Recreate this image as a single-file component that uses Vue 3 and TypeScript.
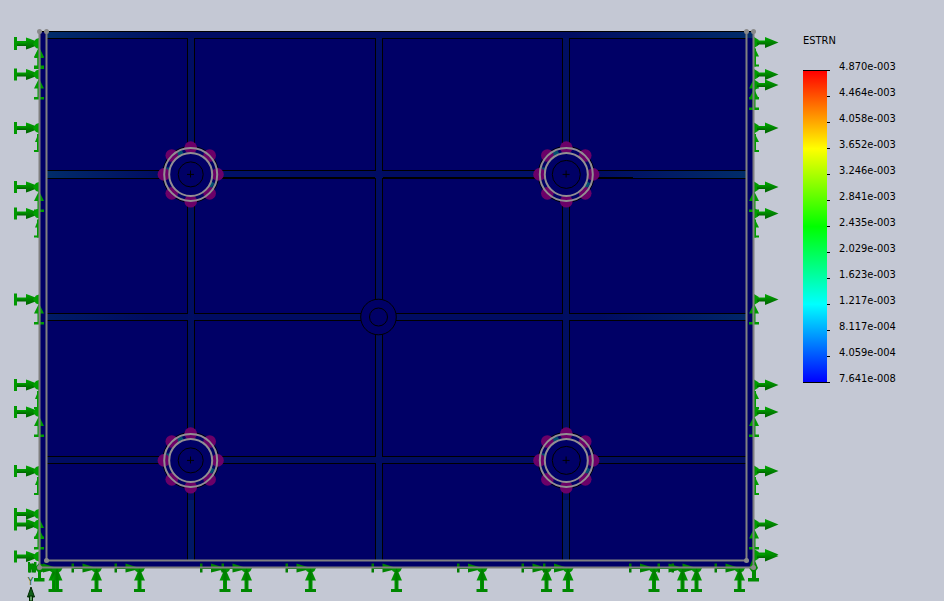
<script setup lang="ts">
interface Point {
  x: number
  y: number
}

interface Load {
  at: number
  side: 'both' | 'outer'
}

interface Bolt extends Point {
  hole: number
}

const columns: [number, number][] = [
  [46.5, 187.5],
  [194.5, 375.5],
  [382.5, 562.5],
  [569.5, 746.5],
]
const rows: [number, number][] = [
  [38.5, 170.5],
  [178.5, 313.5],
  [320.5, 456.5],
  [463.5, 561.5],
]

const bolts: Bolt[] = [
  { x: 190.7, y: 174.4, hole: 12.5 },
  { x: 566.3, y: 174.4, hole: 14 },
  { x: 190.7, y: 460.4, hole: 12.5 },
  { x: 566.3, y: 460.4, hole: 14 },
]
const markers: Point[] = Array.from({ length: 8 }, (_, i) => ({
  x: 26.8 * Math.cos((i * Math.PI) / 4),
  y: 26.8 * Math.sin((i * Math.PI) / 4),
}))

const leftLoads: Load[] = [
  { at: 43, side: 'both' },
  { at: 44, side: 'both' },
  { at: 74.5, side: 'both' },
  { at: 128, side: 'outer' },
  { at: 187, side: 'both' },
  { at: 213.5, side: 'outer' },
  { at: 299.5, side: 'both' },
  { at: 385, side: 'outer' },
  { at: 412, side: 'both' },
  { at: 471, side: 'outer' },
  { at: 514, side: 'both' },
  { at: 524.5, side: 'both' },
  { at: 556.5, side: 'both' },
]
const rightLoads: Load[] = [
  { at: 42.5, side: 'outer' },
  { at: 74.5, side: 'both' },
  { at: 85, side: 'both' },
  { at: 128, side: 'outer' },
  { at: 187, side: 'both' },
  { at: 213.5, side: 'outer' },
  { at: 299.5, side: 'both' },
  { at: 385, side: 'outer' },
  { at: 412, side: 'both' },
  { at: 471, side: 'outer' },
  { at: 524.5, side: 'both' },
  { at: 554.5, side: 'both' },
  { at: 556, side: 'both' },
]
const bottomLoads: number[] = [54, 57, 96.5, 139.5, 225, 246.5, 310.5, 396.5, 482, 546.5, 568, 654, 682.5, 696.5, 739.5]

const corners: Point[] = [
  { x: 39.5, y: 31.5 },
  { x: 46.5, y: 31.5 },
  { x: 746.5, y: 31.5 },
  { x: 753.5, y: 31.5 },
  { x: 46.5, y: 560.5 },
  { x: 746.5, y: 560.5 },
  { x: 39.5, y: 567.5 },
  { x: 753.5, y: 567.5 },
]

const levels: string[] = [
  '4.870e-003',
  '4.464e-003',
  '4.058e-003',
  '3.652e-003',
  '3.246e-003',
  '2.841e-003',
  '2.435e-003',
  '2.029e-003',
  '1.623e-003',
  '1.217e-003',
  '8.117e-004',
  '4.059e-004',
  '7.641e-008',
]
</script>

<template>
  <main class="viewer">
    <svg class="model" viewBox="0 0 790 601" role="img" aria-label="Strain plot of plate">
      <defs>
        <linearGradient id="band-left" x1="0" x2="1">
          <stop offset="0" stop-color="#002c6a" />
          <stop offset="1" stop-color="#000c62" />
        </linearGradient>
        <linearGradient id="band-right" x1="0" x2="1">
          <stop offset="0" stop-color="#000c62" />
          <stop offset="1" stop-color="#002c6a" />
        </linearGradient>
        <linearGradient id="shade-across" x1="0" x2="0" y1="0" y2="1">
          <stop offset="0" stop-color="#00a800" />
          <stop offset="1" stop-color="#006000" />
        </linearGradient>
        <linearGradient id="shade-up" x1="0" x2="1">
          <stop offset="0" stop-color="#00a400" />
          <stop offset="0.5" stop-color="#007c00" />
          <stop offset="1" stop-color="#009c00" />
        </linearGradient>

        <g id="arrow-in">
          <rect x="14" y="-6" width="3" height="12" fill="#009800" />
          <rect x="17" y="-2" width="10" height="4" fill="url(#shade-across)" />
          <path d="M26-5.500 29-4.500 38-1V1L29 4.500 26 5.500Z" fill="url(#shade-across)" />
          <path d="M33 0 36-4 39-5V5L36 4Z" fill="#00a000" />
        </g>
        <g id="arrow-out">
          <path d="M754-5.500 758-3 759-2V2L758 3 754 5.500Z" fill="#009c00" />
          <rect x="757" y="-2" width="9" height="4" fill="url(#shade-across)" />
          <path d="M765-5.500 778.500 0 765 5.500Z" fill="url(#shade-across)" />
        </g>
        <g id="arrow-up">
          <path d="M-5.500 568H5.500L4 571 1 573H-1L-4 571Z" fill="#009400" />
          <path d="M0 568 5.500 580.500H-5.500Z" fill="url(#shade-up)" />
          <rect x="-2" y="580" width="4" height="9" fill="url(#shade-up)" />
          <rect x="-5.500" y="589" width="11" height="3" fill="#008800" />
        </g>
        <g id="slide-both">
          <path d="M0 4 5 14H-5Z" fill="#009c00" />
          <rect x="-1.500" y="13" width="3" height="11" fill="#009c00" />
          <rect x="-5" y="22.500" width="10" height="2.500" fill="#009c00" />
        </g>
        <g id="slide-left">
          <path d="M0 4V14H-4Z" fill="#009c00" />
          <rect x="-2" y="6" width="2" height="18" fill="#009c00" />
          <rect x="-5" y="22" width="5" height="2" fill="#009c00" />
        </g>
        <g id="slide-right">
          <path d="M0 4 5 14H0Z" fill="#009c00" />
          <rect width="2" y="6" height="18" fill="#009c00" />
          <rect width="5" y="22" height="2" fill="#009c00" />
        </g>
        <g id="slide-along">
          <rect x="-25" y="563.500" width="2.500" height="9" fill="#007c00" />
          <rect x="-23" y="568" width="10" height="1" fill="#008000" />
          <path d="M-14 563.500-3 567 0 569-4 570-14 572.500Z" fill="#008400" />
        </g>
      </defs>

      <rect x="39" y="31" width="715" height="537" fill="#000066" />
      <rect x="46" y="32" width="701" height="529" fill="#000c62" />
      <rect x="188" y="39" width="6" height="522" fill="#000e62" />
      <rect x="376" y="39" width="6" height="522" fill="#000c64" />
      <rect x="563" y="39" width="6" height="522" fill="#000e62" />
      <rect x="47" y="32" width="140" height="6" fill="url(#band-left)" />
      <rect x="570" y="32" width="184" height="6" fill="url(#band-right)" />
      <rect x="47" y="171" width="110" height="7" fill="url(#band-left)" />
      <rect x="600" y="171" width="146" height="7" fill="url(#band-right)" />
      <rect x="220" y="171" width="70" height="6" fill="#001066" />
      <rect x="470" y="171" width="68" height="6" fill="#001066" />
      <rect x="47" y="314" width="100" height="6" fill="url(#band-left)" opacity="0.5" />
      <rect x="600" y="314" width="146" height="6" fill="url(#band-right)" opacity="0.8" />
      <rect x="188" y="500" width="6" height="60" fill="#001866" />
      <rect x="376" y="500" width="6" height="60" fill="#001866" />
      <rect x="563" y="500" width="6" height="60" fill="#001866" />

      <template v-for="row in rows" :key="row[0]">
        <rect
          v-for="column in columns"
          :key="column[0]"
          class="cell"
          :x="column[0]"
          :y="row[0]"
          :width="column[1] - column[0]"
          :height="row[1] - row[0]"
        />
      </template>
      <path class="edge" d="M39 31.500H754M220 177.500H375M383 177.500H633" />
      <rect x="47" y="561" width="700" height="7" fill="#000066" />

      <g class="centre">
        <circle cx="378.500" cy="317" r="17.800" />
        <circle cx="378.500" cy="317" r="9" />
      </g>

      <g v-for="bolt in bolts" :key="`${bolt.x}-${bolt.y}`" :transform="`translate(${bolt.x} ${bolt.y})`">
        <circle r="28" fill="#000066" stroke="#000" stroke-width="1" />
        <path d="M-16-21-9-24-7-21-13-17ZM-25-7-21-7-22 2-25 2ZM17 12 21 7 24 9 19 16Z" fill="#005070" />
        <circle v-for="(marker, i) in markers" :key="i" :cx="marker.x" :cy="marker.y" r="6.300" fill="#6c0068" />
        <circle class="ring" r="26.500" />
        <circle class="ring core" r="21.500" />
        <circle class="hole" :r="bolt.hole" />
        <path class="cross" d="M-3.700 0H3.300M-.2-3.900V3.100" />
      </g>

      <template v-for="load in leftLoads" :key="`l${load.at}`">
        <use v-if="load.at < 530" :href="load.side === 'both' ? '#slide-both' : '#slide-left'" x="39" :y="load.at" />
        <use href="#arrow-in" :y="load.at" />
      </template>
      <template v-for="load in rightLoads" :key="`r${load.at}`">
        <use v-if="load.at < 530" :href="load.side === 'both' ? '#slide-both' : '#slide-right'" x="754" :y="load.at" />
        <use href="#arrow-out" :y="load.at" />
      </template>
      <template v-for="x in bottomLoads" :key="`b${x}`">
        <use href="#slide-along" :x="x" />
        <use href="#arrow-up" :x="x" />
      </template>

      <g fill="#008c00">
        <path d="M38 568H41V578H44.500V581.500H34V578H38Z" />
        <path d="M752 568H756V578H759V581.500H748V578H752Z" />
        <path d="M749 568 753.500 557 758 568 753.500 574Z" />
        <path d="M28 562H30V566L32 563 34 566V562H36.500V566L39 563V573L36 570V572.500H34L32 569 30 572.500H28Z" />
      </g>

      <path class="frame" d="M39.500 31V567.500H753.500V31" />
      <path class="frame" d="M46.500 31V560.500H746.500V31" />
      <circle v-for="corner in corners" :key="`${corner.x}-${corner.y}`" :cx="corner.x" :cy="corner.y" r="2.500" fill="#8a8a8a" />

      <text class="axis" x="30.500" y="585" text-anchor="middle">Y</text>
      <path d="M31 587 34.500 597H27.500Z" fill="#106018" stroke="#002800" />
      <rect x="29.500" y="596" width="3" height="5" fill="#60a060" stroke="#002800" />
    </svg>

    <section class="legend" aria-labelledby="legend-title">
      <h1 id="legend-title" class="title">ESTRN</h1>
      <div class="scale">
        <div class="bar"></div>
        <ol class="levels">
          <li v-for="level in levels" :key="level" class="level">{{ level }}</li>
        </ol>
      </div>
    </section>
  </main>
</template>

<style>
body {
  margin: 0;
  background: #c4c8d4;
}
</style>

<style scoped>
.viewer {
  display: grid;
  grid-template-columns: minmax(0, 1fr) 154px;
  min-height: 100vh;
  background: #c4c8d4;
  color: #000;
  font-family: "DejaVu Sans Condensed", "DejaVu Sans", sans-serif;
  font-size: 11px;
}

.model {
  display: block;
  width: 100%;
  height: auto;
}

.cell {
  fill: #000066;
  stroke: #000;
  stroke-width: 1;
  shape-rendering: crispEdges;
}

.edge {
  fill: none;
  stroke: #000;
  shape-rendering: crispEdges;
}

.centre {
  fill: #000066;
  stroke: #000;
}

.ring {
  fill: none;
  stroke: #928e92;
  stroke-width: 2;
}

.core {
  fill: #000066;
}

.hole {
  fill: none;
  stroke: #000;
}

.cross {
  stroke: #000;
}

.frame {
  fill: none;
  stroke: #808080;
  stroke-width: 2;
}

.axis {
  fill: #206020;
  font-size: 10px;
}

.legend {
  padding: 33px 0 0 13px;
}

.title {
  margin: 0;
  font-size: 11px;
  font-weight: 400;
  line-height: 16px;
}

.scale {
  display: flex;
  padding-top: 5px;
}

.bar {
  box-sizing: border-box;
  width: 24px;
  margin: 16px 0 9px;
  border-top: 1px solid #000;
  border-bottom: 1px solid #000;
  background: linear-gradient(#f00, #ff0 25%, #0f0 50%, #0ff 75%, #00f);
}

.levels {
  margin: 0;
  padding: 0;
  list-style: none;
}

.level {
  position: relative;
  padding-left: 12px;
  line-height: 26px;
}

.level::before {
  content: "";
  position: absolute;
  top: 16px;
  left: 0;
  width: 3px;
  height: 1px;
  background: #000;
}
</style>
